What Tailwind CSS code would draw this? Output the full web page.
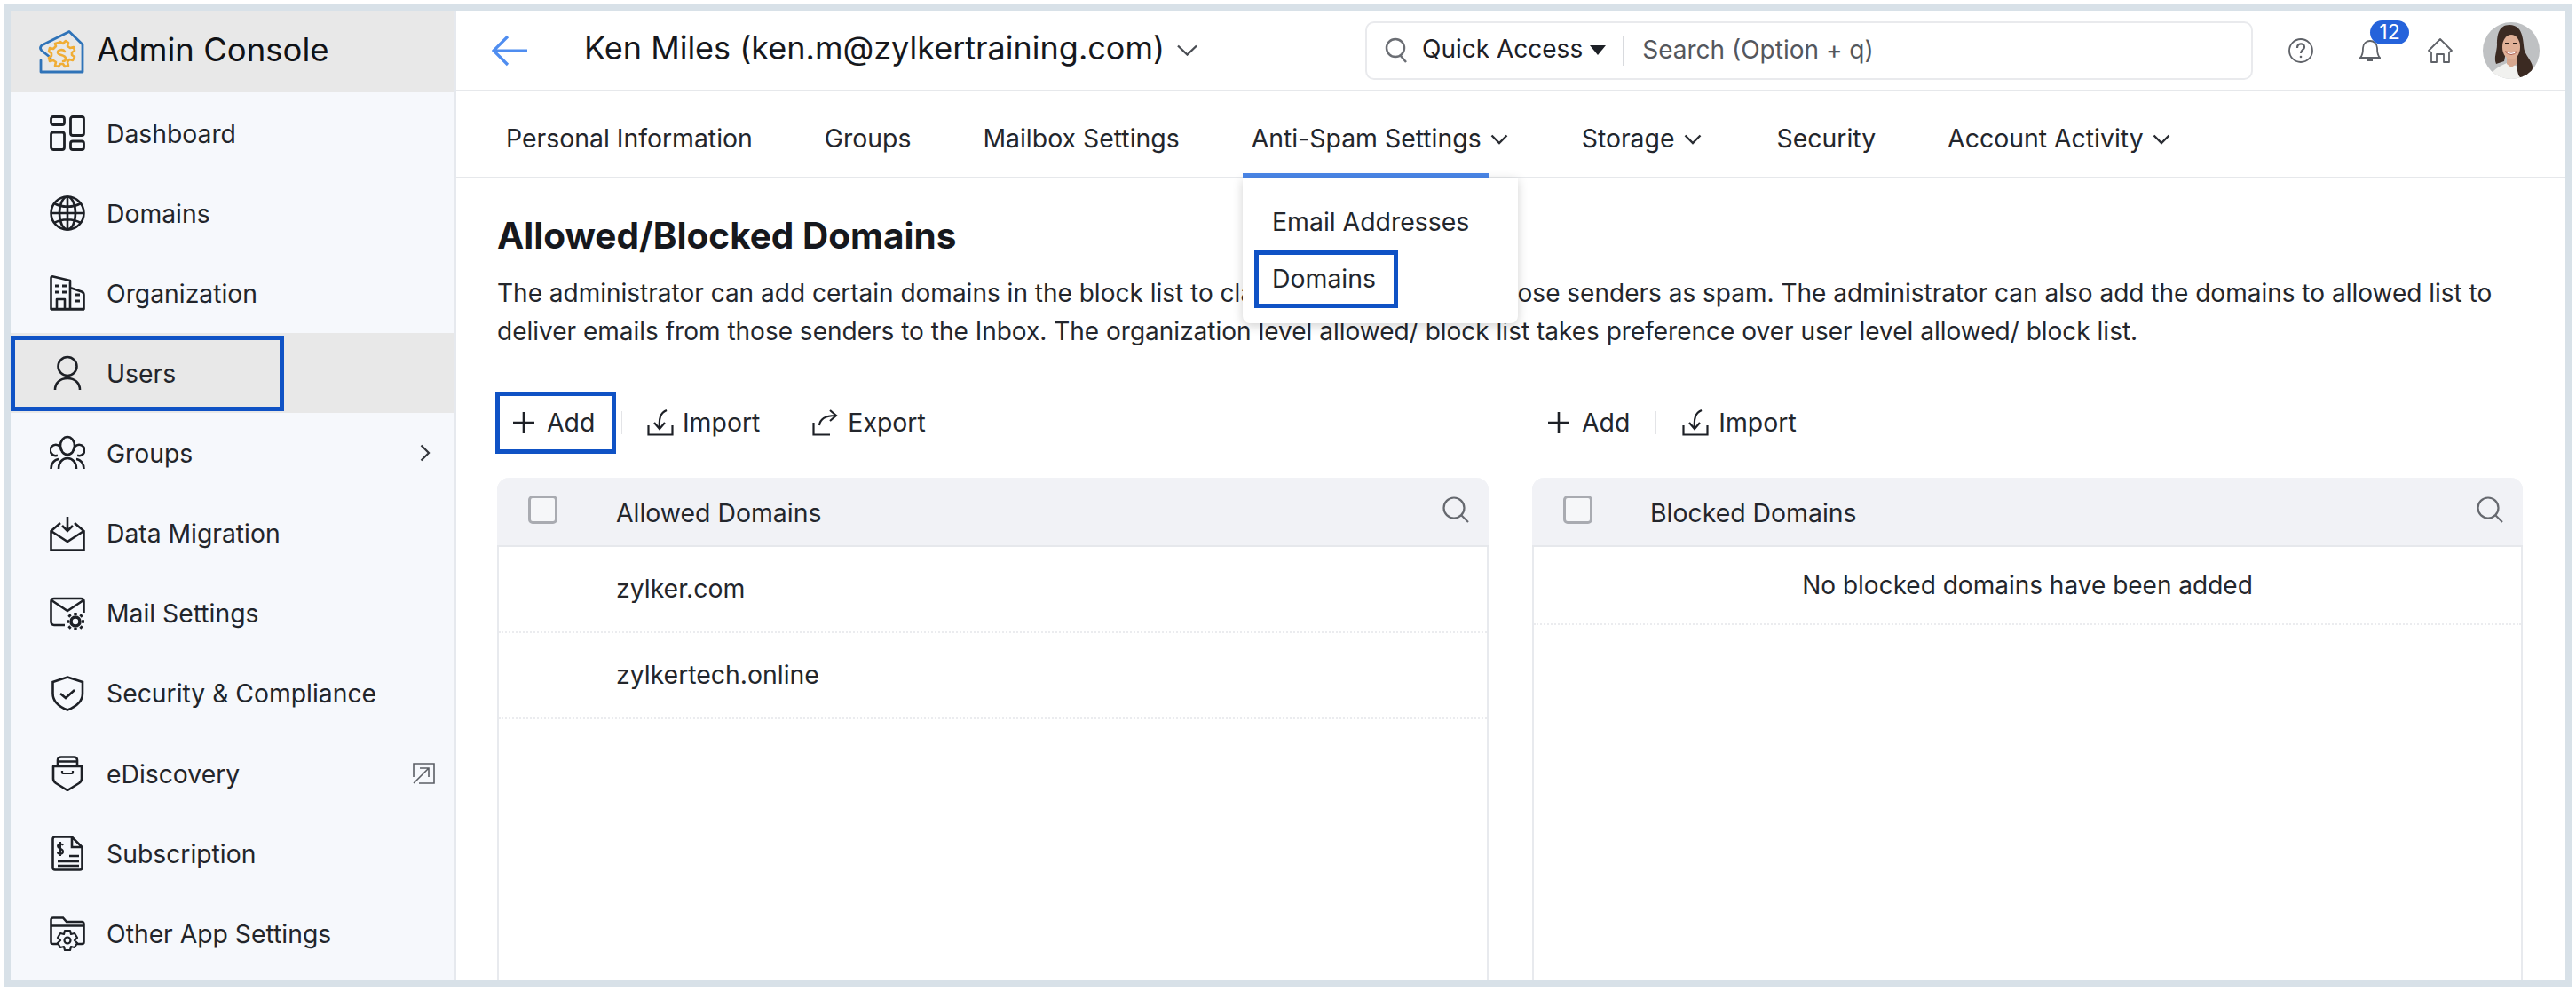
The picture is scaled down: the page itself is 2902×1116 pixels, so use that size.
<!doctype html>
<html><head><meta charset="utf-8"><script src="https://cdn.jsdelivr.net/npm/@tailwindcss/browser@4"></script></head>
<body class="bg-white font-['Inter','Liberation_Sans',sans-serif] text-[#16181d] overflow-hidden">
<div class="w-[2902px] h-[1116px] p-1">
<div class="w-full h-full border-8 border-[#d8e1e8] flex overflow-hidden">
  <!-- sidebar -->
  <aside class="w-[502px] shrink-0 h-full bg-[#f6f8fc] border-r-2 border-[#e6e9ee] flex flex-col text-[28.3px] text-[#22252b]">
    <div class="h-[92px] bg-[#e8e8e8] flex items-center pl-[29px] gap-[14px] text-[36.5px] text-[#101216]">
      <svg class="w-[54px] h-[52px] shrink-0" viewBox="0 0 54 52" fill="none"><path d="M5 36V49H52V18L37 3.500 6 19Q3 22 6 25L16 33" stroke="#2f73b8" stroke-width="2.800" stroke-linejoin="round" stroke-linecap="round"/><path d="M26 15l3 2 3-3 3 2-1 4 3 2 4-1 1 4-3 2v3l3 2-2 4-4-1-2 3 1 4-4 1-2-3h-3l-2 3-4-1 1-4-3-2-4 1-1-4 3-2v-3l-3-2 1-4 4 1 3-3-1-3 4-1z" transform="translate(1 0)" stroke="#f0ad35" stroke-width="2.600" stroke-linejoin="round"/><path d="M32 26c-2-3-8-2-8 1 0 4 9 2 9 7 0 2-1 3-3 3" stroke="#f0ad35" stroke-width="2.600" stroke-linecap="round"/></svg>
      <span class="pb-[3px]">Admin Console</span>
    </div>
    <nav class="flex flex-col pt-px">
      <div class="h-[90.1px] flex items-center pl-[44px] gap-[24px]">
        <svg class="w-10 h-10" viewBox="0 0 40 40" fill="none" stroke="#1d2026" stroke-width="2.8"><rect x="1.5" y="1.5" width="15" height="9" rx="2.5"/><rect x="1.5" y="19" width="15" height="19.5" rx="2.5"/><rect x="23.5" y="1.5" width="15" height="21" rx="2.5"/><rect x="23.5" y="29" width="15" height="9.5" rx="2.5"/></svg>
        <span class="pt-[2px]">Dashboard</span></div>
      <div class="h-[90.1px] flex items-center pl-[44px] gap-[24px]">
        <svg class="w-10 h-10" viewBox="0 0 40 40" fill="none" stroke="#1d2026" stroke-width="2.6"><circle cx="20" cy="20" r="18.5"/><ellipse cx="20" cy="20" rx="9" ry="18.5"/><path d="M20 1.5V38.5M1.5 20H38.5M5 9c9 5 21 5 30 0M5 31c9-5 21-5 30 0"/></svg>
        <span class="pt-[2px]">Domains</span></div>
      <div class="h-[90.1px] flex items-center pl-[44px] gap-[24px]">
        <svg class="w-10 h-10" viewBox="0 0 40 40" fill="none" stroke="#1d2026" stroke-width="2.6" stroke-linejoin="round"><path d="M1.500 38V3Q1.500 1 4 1.500L23 6V38ZM23 14 36 18.500Q38.500 19.500 38.500 22V38H23M1 38.500H39M8 38V27H17V38"/><path d="M6 12h5M14 12h5M6 19h5M14 19h5M28 22h6M28 29h6" stroke-width="2.800"/></svg>
        <span class="pt-[2px]">Organization</span></div>
      <div class="h-[90.1px] flex items-center pl-[44px] gap-[24px] bg-[#e8e8e8] relative">
        <div class="absolute left-0 top-[3px] w-[308px] h-[85px] border-[5px] border-[#0f52c5]"></div>
        <svg class="w-10 h-10" viewBox="0 0 40 40" fill="none" stroke="#1d2026" stroke-width="2.6"><circle cx="20" cy="12.5" r="10.5"/><path d="M6 39C6 31 12 26 20 26S34 31 34 39"/></svg>
        <span class="relative pt-[2px]">Users</span></div>
      <div class="h-[90.1px] flex items-center pl-[44px] pr-[27px] gap-[24px]">
        <svg class="w-10 h-10" viewBox="0 0 40 40" fill="none" stroke="#1d2026" stroke-width="2.6"><ellipse cx="20" cy="12" rx="8" ry="10"/><path d="M13 18A6.200 6.200 0 1 0 9 22.800M27 18A6.200 6.200 0 1 1 31 22.800"/><path d="M1.500 38C1.500 32 5 27.500 10 27M38.500 38C38.500 32 35 27.500 30 27M10 38C10 31 14 26 20 26S30 31 30 38"/></svg>
        <span class="pt-[2px]">Groups</span>
        <svg class="ml-auto w-[12px] h-[20px]" viewBox="0 0 12 20" fill="none" stroke="#33363c" stroke-width="2.2"><path d="M1.5 1.5 10 10 1.5 18.5"/></svg></div>
      <div class="h-[90.1px] flex items-center pl-[44px] gap-[24px]">
        <svg class="w-10 h-10" viewBox="0 0 40 40" fill="none" stroke="#1d2026" stroke-width="2.6"><path d="M20 1V16M14 11l6 6 6-6M12 8 1.5 17V38.5H38.5V17L28 8M1.5 17 20 29 38.5 17"/></svg>
        <span class="pt-[2px]">Data Migration</span></div>
      <div class="h-[90.1px] flex items-center pl-[44px] gap-[24px]">
        <svg class="w-10 h-10" viewBox="0 0 40 40" fill="none" stroke="#1d2026" stroke-width="2.6"><path d="M17 33H5Q1.500 33 1.500 29V6Q1.500 3 5 3H35Q38.500 3 38.500 6V19"/><path d="M2 5 20 17 38 5"/><circle cx="29" cy="29" r="5" stroke-width="3.600" fill="#f6f8fc"/><path d="M29 22v-3M29 39v-3M22 29h-3M39 29h-3M23.500 23.500l-2-2M36.500 36.500l-2-2M34.500 23.500l2-2M23.500 34.500l-2 2" stroke-width="3.400"/></svg>
        <span class="pt-[2px]">Mail Settings</span></div>
      <div class="h-[90.1px] flex items-center pl-[44px] gap-[24px]">
        <svg class="w-10 h-10" viewBox="0 0 40 40" fill="none" stroke="#1d2026" stroke-width="2.600"><path d="M20 1.500 37 7V20C37 29 29 35 20 38.500 11 35 3.500 29 3.500 20V7Z"/><path d="M12 20l6 5 10-9"/></svg>
        <span class="pt-[2px]">Security &amp; Compliance</span></div>
      <div class="h-[90.1px] flex items-center pl-[44px] pr-[22px] gap-[24px]">
        <svg class="w-10 h-10" viewBox="0 0 40 40" fill="none" stroke="#1d2026" stroke-width="2.600" stroke-linejoin="round"><path d="M4 12H36V26Q36 29 33 31L20 39 7 31Q4 29 4 26Z"/><path d="M9 12V5Q9 1.500 13 1.500H27Q31 1.500 31 5V12M9 6.500H31"/><path d="M14 17V19Q14 20 15 20H25Q26 20 26 19V17" stroke-width="2.200"/></svg>
        <span class="pt-[2px]">eDiscovery</span>
        <svg class="ml-auto w-[25px] h-[24px]" viewBox="0 0 25 24" fill="none" stroke="#5b5e64" stroke-width="1.600"><path d="M1 16V1H24V23H7M1 23 18 6M8 6H18V16"/></svg></div>
      <div class="h-[90.1px] flex items-center pl-[44px] gap-[24px]">
        <svg class="w-10 h-10" viewBox="0 0 40 40" fill="none" stroke="#1d2026" stroke-width="2.600"><path d="M25 1.500H6Q3.500 1.500 3.500 4V36Q3.500 38.500 6 38.500H34Q36.500 38.500 36.500 36V13ZM25 1.500V13H36.500M22 23H33M9 29H33M9 34H33" /><path d="M15 11c-1-2-6-2-6 1s6 2 6 6-6 3-6 1M12 7V23" stroke-width="2"/></svg>
        <span class="pt-[2px]">Subscription</span></div>
      <div class="h-[90.1px] flex items-center pl-[44px] gap-[24px]">
        <svg class="w-10 h-10" viewBox="0 0 40 40" fill="none" stroke="#1d2026" stroke-width="2.600"><path d="M9 32H4Q1.500 32 1.500 30V5Q1.500 2.500 4 2.500H15L19 7H36Q38.500 7 38.500 9.500V30Q38.500 32 36 32H31M1.500 11.500H38.500"/><circle cx="20" cy="28" r="3.500" stroke-width="2.200"/><path d="M17 17h6l1 4 4-1 3 5-3 3 3 3-3 5-4-1-1 4h-6l-1-4-4 1-3-5 3-3-3-3 3-5 4 1z" stroke-width="2.200" stroke-linejoin="round"/></svg>
        <span class="pt-[2px]">Other App Settings</span></div>
    </nav>
  </aside>
  <!-- main -->
  <main class="flex-1 min-w-0 flex flex-col relative">
    <header class="h-[91px] shrink-0 border-b-2 border-[#e6e8eb] flex items-center">
      <svg class="ml-[40px] w-[40px] h-[36px]" viewBox="0 0 40 36" fill="none" stroke="#4f8df0" stroke-width="3.200"><path d="M18 2 2 18 18 34M2 18H40"/></svg>
      <div class="ml-[33px] w-px h-[54px] bg-[#e8e9ec]"></div>
      <div class="ml-[30px] text-[36px] text-[#16181d] w-[654px] whitespace-nowrap pb-[5px]">Ken Miles (ken.m@zylkertraining.com)</div>
      <svg class="ml-[14px] w-[23px] h-[13px]" viewBox="0 0 23 13" fill="none" stroke="#4a4d53" stroke-width="2.400"><path d="M1 1.500 11.500 11.500 22 1.500"/></svg>
      <div class="ml-[189px] w-[1000px] h-[66px] border-2 border-[#e9eaed] rounded-[10px] flex items-center text-[28px]">
        <svg class="ml-[20px] w-[28px] h-[30px]" viewBox="0 0 28 30" fill="none" stroke="#6b6e74" stroke-width="2.500"><circle cx="12" cy="12" r="10"/><path d="M18 21 24 28"/></svg>
        <span class="ml-[14px] text-[#1d2026] pb-[4px]">Quick Access</span>
        <span class="ml-[8px] w-0 h-0 border-x-[9px] border-x-transparent border-t-[11px] border-t-[#1d2026]"></span>
        <span class="ml-[19px] w-px h-[34px] bg-[#d8dade]"></span>
        <span class="ml-[21px] text-[#54575d] pb-[2px]">Search (Option + q)</span>
      </div>
      <svg class="ml-[40px] w-[28px] h-[28px]" viewBox="0 0 28 28" fill="none" stroke="#5f6268" stroke-width="1.800"><circle cx="14" cy="14" r="13"/><path d="M10 11c0-6 8-6 8-1 0 3-4 3-4 7" stroke-width="2.200"/><circle cx="14" cy="21" r="1.300" fill="#5f6268" stroke="none"/></svg>
      <div class="ml-[52px] relative w-[24px] h-[28px]">
        <svg class="absolute left-0 top-0 w-[24px] h-[28px]" viewBox="0 0 24 28" fill="none" stroke="#5f6268" stroke-width="1.800"><path d="M1 22C4 19 4 15 4 11 4 6 8 3 12 3S20 6 20 11C20 15 20 19 23 22ZM9 25H15"/></svg>
        <div class="absolute left-[12px] top-[-20px] w-[44px] h-[27px] rounded-full bg-[#2563db] text-white text-[23px] leading-[27px] text-center">12</div>
      </div>
      <svg class="ml-[53px] w-[28px] h-[28px]" viewBox="0 0 28 28" fill="none" stroke="#5f6268" stroke-width="1.800" stroke-linejoin="round"><path d="M14 1 1 14 4 16V27H10V18H18V27H24V16L27 14Z"/></svg>
      <svg class="ml-[34px] w-[64px] h-[64px] rounded-full" viewBox="0 0 64 64"><rect width="64" height="64" fill="#bfc1c3"/><path d="M6 64C10 54 18 50 27 46L40 50 48 64Z" fill="#f1f1ef"/><path d="M30 3C18 3 16 14 16 25 16 33 12 40 15 47L24 44 28 24 38 22 39 40C38 46 38 58 42 62 48 63 55 58 56 52 57 46 50 40 47 32 45 24 47 3 30 3Z" fill="#3b2a22"/><path d="M27 38V47L32 51 38 47V38Z" fill="#d6a78f"/><ellipse cx="32" cy="28" rx="10" ry="14" fill="#e0b097"/><path d="M25 33Q32 40 39 33Q32 35 25 33Z" fill="#fff" stroke="#a9584c" stroke-width="1"/><path d="M25 24h5M34 24h5" stroke="#2a1d18" stroke-width="1.800"/></svg>
    </header>
    <div class="h-[98px] shrink-0 border-b-2 border-[#e6e8eb] flex items-center pl-[56px] pt-[10px] gap-[81px] text-[28.4px] text-[#23262c] relative">
      <span>Personal Information</span>
      <span>Groups</span>
      <span>Mailbox Settings</span>
      <span class="flex items-center gap-[10px] relative">Anti-Spam Settings<svg class="w-[20px] h-[12px] mr-[2px] mt-[3px]" viewBox="0 0 20 12" fill="none" stroke="#2a2d33" stroke-width="2.400"><path d="M1.500 1.500 10 10 18.500 1.500"/></svg></span>
      <span class="flex items-center gap-[10px]">Storage<svg class="w-[20px] h-[12px] mr-[4px] mt-[3px]" viewBox="0 0 20 12" fill="none" stroke="#2a2d33" stroke-width="2.400"><path d="M1.500 1.500 10 10 18.500 1.500"/></svg></span>
      <span>Security</span>
      <span class="flex items-center gap-[10px]">Account Activity<svg class="w-[20px] h-[12px] mr-[2px] mt-[3px]" viewBox="0 0 20 12" fill="none" stroke="#2a2d33" stroke-width="2.400"><path d="M1.500 1.500 10 10 18.500 1.500"/></svg></span>
      <div class="absolute left-[886px] bottom-[-2px] w-[277px] h-[6px] bg-[#4a86e8]"></div>
    </div>
    <div class="absolute left-[886px] top-[188px] w-[310px] h-[164px] bg-white rounded-[8px] rounded-t-none shadow-[0_3px_12px_rgba(0,0,0,0.18)] z-10 text-[28.4px] text-[#23262c]">
      <div class="pl-[33px] pt-[32px] leading-[36px]">Email Addresses</div>
      <div class="absolute left-[13px] top-[82px] w-[162px] h-[65px] border-[5px] border-[#0f52c5] pl-[15px] flex items-center">Domains</div>
    </div>
    <section class="flex-1 min-h-0 pl-[46px] flex flex-col">
      <h1 class="mt-[40px] text-[40.5px] leading-[50px] font-bold text-[#16181d]">Allowed/Blocked Domains</h1>
      <p class="mt-[18px] w-[2290px] text-[28px] leading-[43px] text-[#23262c]">The administrator can add certain domains in the block list to <span class="[word-spacing:19px]">classify emails from</span> those senders as spam. The administrator can also add the domains to allowed list to deliver emails from those senders to the Inbox. The organization level allowed/ block list takes preference over user level allowed/ block list.</p>
      <div class="mt-[46px] flex gap-[49px] text-[28.4px] text-[#23262c]">
        <div class="w-[1117px] flex items-center h-[70px]">
          <div class="ml-[-2px] w-[136px] h-[70px] border-[5px] border-[#0f52c5] flex items-center pl-[15px] gap-[14px]">
            <svg class="w-[24px] h-[24px]" viewBox="0 0 24 24" fill="none" stroke="#1d2026" stroke-width="2.600"><path d="M12 0V24M0 12H24"/></svg><span>Add</span></div>
          <span class="ml-[6px] w-px h-[26px] bg-[#e3e4e7]"></span>
          <svg class="ml-[28px] w-[30px] h-[30px]" viewBox="0 0 30 30" fill="none" stroke="#1d2026" stroke-width="2.200"><path d="M1.500 18V28.500H28.500V18M22 1C15 4 13 10 14 21M8 15 14 22 20 15"/></svg>
          <span class="ml-[10px]">Import</span>
          <span class="ml-[29px] w-px h-[26px] bg-[#e3e4e7]"></span>
          <svg class="ml-[29px] w-[30px] h-[30px]" viewBox="0 0 30 30" fill="none" stroke="#1d2026" stroke-width="2.200"><path d="M1.500 15V28.500H20M8 18C9 10 15 7 26 7M20 1 27 7 20 13"/></svg>
          <span class="ml-[10px]">Export</span>
        </div>
        <div class="flex items-center h-[70px] ml-[18px]">
          <svg class="w-[24px] h-[24px]" viewBox="0 0 24 24" fill="none" stroke="#1d2026" stroke-width="2.600"><path d="M12 0V24M0 12H24"/></svg><span class="ml-[14px]">Add</span>
          <span class="ml-[29px] w-px h-[26px] bg-[#e3e4e7]"></span>
          <svg class="ml-[29px] w-[30px] h-[30px]" viewBox="0 0 30 30" fill="none" stroke="#1d2026" stroke-width="2.200"><path d="M1.500 18V28.500H28.500V18M22 1C15 4 13 10 14 21M8 15 14 22 20 15"/></svg>
          <span class="ml-[11px]">Import</span>
        </div>
      </div>
      <div class="mt-[27px] flex-1 min-h-0 flex gap-[49px] text-[28.4px] text-[#23262c]">
        <div class="w-[1117px] h-full border-x-2 border-[#e8eaee] rounded-t-[14px] flex flex-col">
          <div class="h-[78px] bg-[#f1f2f6] border-b-2 border-[#e6e8ec] rounded-t-[14px] flex items-center relative -mx-[2px]">
            <span class="ml-[35px] mb-[4px] w-[33px] h-[32px] border-[3px] border-[#a9abb1] rounded-[5px] bg-white/40"></span>
            <span class="ml-[66px] pt-[4px]">Allowed Domains</span>
            <svg class="ml-auto mr-[22px] mb-[4px] w-[30px] h-[30px]" viewBox="0 0 30 30" fill="none" stroke="#66696f" stroke-width="2.200"><circle cx="13" cy="13" r="11.500"/><path d="M21 21 29 29"/></svg>
          </div>
          <div class="h-[97px] border-b-2 border-dotted border-[#ebecef] pl-[132px] flex items-center">zylker.com</div>
          <div class="h-[97px] border-b-2 border-dotted border-[#ebecef] pl-[132px] flex items-center">zylkertech.online</div>
        </div>
        <div class="w-[1116px] h-full border-x-2 border-[#e8eaee] rounded-t-[14px] flex flex-col">
          <div class="h-[78px] bg-[#f1f2f6] border-b-2 border-[#e6e8ec] rounded-t-[14px] flex items-center relative -mx-[2px]">
            <span class="ml-[35px] mb-[4px] w-[33px] h-[32px] border-[3px] border-[#a9abb1] rounded-[5px] bg-white/40"></span>
            <span class="ml-[65px] pt-[4px]">Blocked Domains</span>
            <svg class="ml-auto mr-[22px] mb-[4px] w-[30px] h-[30px]" viewBox="0 0 30 30" fill="none" stroke="#66696f" stroke-width="2.200"><circle cx="13" cy="13" r="11.500"/><path d="M21 21 29 29"/></svg>
          </div>
          <div class="h-[88px] border-b-2 border-dotted border-[#ebecef] flex items-center justify-center text-[28px]">No blocked domains have been added</div>
        </div>
      </div>
    </section>
  </main>
</div></div>
</body></html>
